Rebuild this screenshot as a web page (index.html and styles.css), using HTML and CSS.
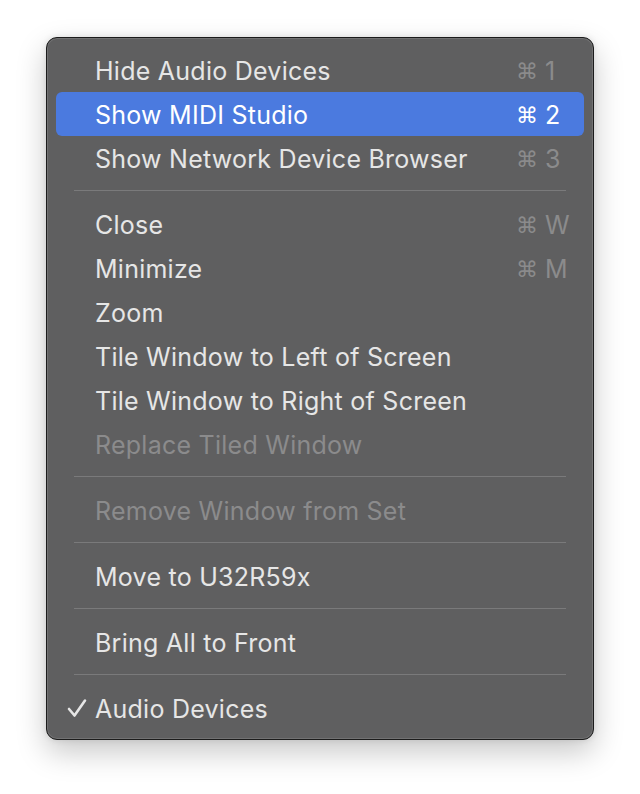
FILE: index.html
```html
<!DOCTYPE html>
<html lang="en">
<head>
    <meta charset="UTF-8">
    <title>Window Menu</title>
    <link rel="stylesheet" href="styles.css">
</head>
<body>
    <div class="menu">
        <div class="menu-item"><span class="label">Hide Audio Devices</span><span class="shortcut"><span class="cmd">⌘</span>1</span></div>
        <div class="menu-item selected"><span class="label">Show MIDI Studio</span><span class="shortcut"><span class="cmd">⌘</span>2</span></div>
        <div class="menu-item"><span class="label">Show Network Device Browser</span><span class="shortcut"><span class="cmd">⌘</span>3</span></div>
        <div class="separator"></div>
        <div class="menu-item"><span class="label">Close</span><span class="shortcut"><span class="cmd">⌘</span>W</span></div>
        <div class="menu-item"><span class="label">Minimize</span><span class="shortcut"><span class="cmd">⌘</span>M</span></div>
        <div class="menu-item"><span class="label">Zoom</span></div>
        <div class="menu-item"><span class="label">Tile Window to Left of Screen</span></div>
        <div class="menu-item"><span class="label">Tile Window to Right of Screen</span></div>
        <div class="menu-item disabled"><span class="label">Replace Tiled Window</span></div>
        <div class="separator"></div>
        <div class="menu-item disabled"><span class="label">Remove Window from Set</span></div>
        <div class="separator"></div>
        <div class="menu-item"><span class="label">Move to U32R59x</span></div>
        <div class="separator"></div>
        <div class="menu-item"><span class="label">Bring All to Front</span></div>
        <div class="separator"></div>
        <div class="menu-item">
            <svg class="check" width="20" height="20" viewBox="0 0 20 20">
                <polyline points="2,11 7.5,17.5 18,2.5" fill="none" stroke="#e6e6e6" stroke-width="2.6" stroke-linecap="round" stroke-linejoin="round"/>
            </svg>
            <span class="label">Audio Devices</span>
        </div>
    </div>
</body>
</html>
```

FILE: styles.css
```css
html {
    min-height: 100%;
    background-color: #ffffff;
}
body {
    margin: 0;
    padding-bottom: 54px;
    background-color: #ffffff;
    font-family: Inter, "Noto Sans", sans-serif;
}
.menu {
    width: 548px;
    margin: 37px 0 0 46px;
    padding: 10px 9px 9px 9px;
    box-sizing: border-box;
    background-color: #5f5f60;
    border: 1px solid #1c1c1c;
    border-radius: 11px;
    box-shadow: inset 0 0 0 1px rgba(255, 255, 255, 0.12), 0 12px 30px rgba(0, 0, 0, 0.22), 0 0 6px rgba(0, 0, 0, 0.1);
}
.menu-item {
    position: relative;
    display: flex;
    align-items: center;
    height: 44px;
    padding-left: 39px;
    padding-top: 2px;
    box-sizing: border-box;
    border-radius: 6px;
    color: #e6e6e6;
    font-size: 25px;
    letter-spacing: 0.25px;
}
.menu-item .label {
    flex: 1;
}
.menu-item.selected {
    background-color: #4b7adf;
    color: #ffffff;
}
.menu-item.disabled {
    color: #8b8b8c;
}
.shortcut {
    width: 68px;
    display: flex;
    align-items: center;
    color: #8b8b8c;
}
.menu-item.selected .shortcut {
    color: #ffffff;
}
.cmd {
    width: 29px;
    font-family: "DejaVu Sans", sans-serif;
    font-size: 22px;
}
.check {
    position: absolute;
    left: 11px;
    top: 12px;
}
.separator {
    height: 1px;
    margin: 10px 18px 11px 18px;
    background-color: #7a7a7b;
}
```
